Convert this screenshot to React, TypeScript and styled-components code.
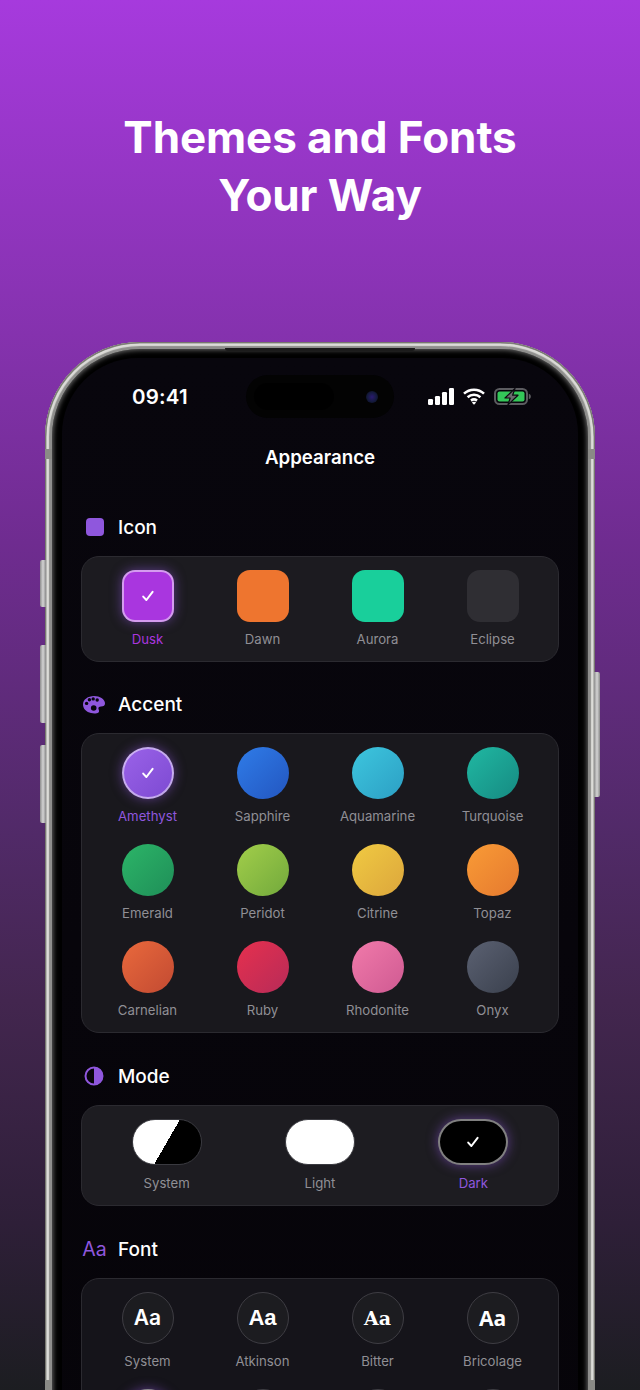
import React from 'react';
import styled, {createGlobalStyle, css} from 'styled-components';

const GlobalStyle = createGlobalStyle`
html, body {
    margin: 0;
    padding: 0;
    background: #1c1c20;
}
* {
    box-sizing: border-box;
}
`;

const UI_FONT = `Inter, "Noto Sans", sans-serif`;
const ACCENT = '#8f57dd';

const Page = styled.div`
display: flex;
flex-direction: column;
align-items: center;
width: 640px;
height: 1390px;
overflow: hidden;
font-family: ${UI_FONT};
background: linear-gradient(180deg, #a63add 0%, #8532ae 24%, #6f2c90 39%, #512a68 60%, #43264f 72%, #2e1f38 88%, #1c1d21 100%);
`;

const Headline = styled.h1`
margin: 108px 0 0;
font-size: 44px;
line-height: 58px;
font-weight: 700;
letter-spacing: -0.1px;
text-align: center;
color: #fff;
`;

const PhoneWrap = styled.div`
position: relative;
flex: none;
width: 550px;
height: 1200px;
margin-top: 118px;
`;

const SideButton = styled.div<{$side: 'left' | 'right'; $top: number; $height: number}>`
position: absolute;
top: ${p => p.$top}px;
height: ${p => p.$height}px;
width: 6px;
${p => p.$side === 'left' ? css`left: -5px; border-radius: 2px 0 0 2px;` : css`right: -5px; border-radius: 0 2px 2px 0;`}
background: linear-gradient(90deg, #8d8d8d, #d4d4d4 50%, #8a8a8a);
`;

const AntennaBand = styled.div<{$side: 'left' | 'right'; $top: number}>`
position: absolute;
top: ${p => p.$top}px;
${p => p.$side}: 0;
width: 7px;
height: 10px;
background: #8a8a86;
`;

const Frame = styled.div`
height: 100%;
padding: 7px;
border-radius: 95px;
background: #8e8e8c;
box-shadow: inset 0 0 0 1px #77776f, inset 0 0 0 1.5px #8e8e8c, inset 0 0 1px 4px #dcdcd8;
`;

const Bezel = styled.div`
position: relative;
height: 100%;
padding: 9px 10px;
border-radius: 88px;
background: #000;
box-shadow: inset 0 0 5px 1px rgba(150, 150, 150, 0.7);
`;

const Earpiece = styled.div`
position: absolute;
top: -1px;
left: 50%;
width: 190px;
height: 3px;
margin-left: -95px;
background: #1b1b1b;
border-radius: 0 0 8px 8px;
`;

const Screen = styled.div`
position: relative;
height: 100%;
padding: 24px 19px 0;
border-radius: 76px;
background: linear-gradient(180deg, #08060d 0%, #060409 100%);
overflow: hidden;
`;

const Island = styled.div`
position: absolute;
top: 17px;
left: 184px;
display: flex;
align-items: center;
justify-content: space-between;
width: 148px;
height: 43px;
padding: 0 9px 0 8px;
border-radius: 22px;
background: #030303;
`;

const IslandPill = styled.div`
width: 80px;
height: 27px;
border-radius: 14px;
background: #000;
`;

const Lens = styled.div`
width: 12px;
height: 12px;
margin-right: 7px;
border-radius: 50%;
background: radial-gradient(circle, #2a1a70 0%, #141a3c 55%, #080a14 100%);
`;

const StatusBar = styled.div`
display: flex;
align-items: center;
justify-content: space-between;
height: 28px;
padding: 0 28px 0 51px;
`;

const Clock = styled.span`
font-size: 20.5px;
font-weight: 600;
letter-spacing: 0.2px;
color: #fff;
`;

const StatusIcons = styled.div`
display: flex;
align-items: center;
gap: 9px;
`;

const Title = styled.div`
margin-top: 36px;
font-size: 18.7px;
line-height: 24px;
font-weight: 600;
text-align: center;
color: #fff;
`;

const SectionHead = styled.div<{$first?: boolean}>`
display: flex;
align-items: center;
gap: 14px;
height: 24px;
margin-top: ${p => p.$first ? 45.4 : 31}px;
padding-left: 3px;
font-size: 19px;
font-weight: 500;
color: #fff;
`;

const IconSlot = styled.span`
display: flex;
align-items: center;
justify-content: center;
width: 20px;
height: 20px;
color: ${ACCENT};
`;

const SquareIcon = styled.span`
width: 18px;
height: 18px;
margin-left: 1px;
border-radius: 4px;
background: ${ACCENT};
`;

const AaIcon = styled.span`
margin-left: 1px;
font-size: 19.5px;
font-weight: 400;
line-height: 20px;
color: ${ACCENT};
`;

const Card = styled.div<{$cols: number; $shade: string}>`
display: grid;
grid-template-columns: repeat(${p => p.$cols}, 1fr);
row-gap: 18px;
margin-top: 16.5px;
padding: 13px 8px 12px;
border: 1px solid #2b2a30;
border-radius: 18px;
background: ${p => p.$shade};
`;

const Option = styled.div`
display: flex;
flex-direction: column;
align-items: center;
`;

const selectedRing = css`
border: 2px solid rgba(255, 255, 255, 0.5);
box-shadow: 0 0 12px rgba(143, 87, 221, 0.55);
`;

const Swatch = styled.div<{$fill: string; $round?: boolean; $selected?: boolean}>`
display: flex;
align-items: center;
justify-content: center;
width: 52px;
height: 52px;
border-radius: ${p => p.$round ? '50%' : '13px'};
background: ${p => p.$fill};
${p => p.$selected && selectedRing}
`;

const ModePill = styled.div<{$fill: string; $selected?: boolean}>`
display: flex;
align-items: center;
justify-content: center;
width: 70px;
height: 46px;
margin-bottom: 1.5px;
border: 1px solid #3a3a40;
border-radius: 23px;
background: ${p => p.$fill};
${p => p.$selected && selectedRing}
`;

const FontCircle = styled.div<{$family: string; $weight: number; $size: number; $selected?: boolean}>`
display: flex;
align-items: center;
justify-content: center;
width: 52px;
height: 52px;
border: 1px solid #3e3d43;
border-radius: 50%;
background: #1c1c20;
font-family: ${p => p.$family};
font-weight: ${p => p.$weight};
font-size: ${p => p.$size}px;
color: #fff;
${p => p.$selected && selectedRing}
`;

const Label = styled.span<{$selected?: boolean; $tint?: string}>`
margin-top: 8px;
font-size: 13.2px;
line-height: 19px;
white-space: nowrap;
color: ${p => p.$selected ? (p.$tint || ACCENT) : '#908f95'};
`;

const Tick = () => (
    <svg width="14" height="14" viewBox="0 0 14 14" fill="none" stroke="#fff" strokeWidth="2" strokeLinecap="round" strokeLinejoin="round">
        <path d="M2.2 7.6 5.400 11 11.600 2.800"/>
    </svg>
);

const SignalIcon = () => (
    <svg width="26" height="17" viewBox="0 0 26 17" fill="#fff">
        <rect x="0" y="11" width="5" height="6" rx="1.200"/>
        <rect x="7" y="8" width="5" height="9" rx="1.200"/>
        <rect x="14" y="4" width="5" height="13" rx="1.200"/>
        <rect x="21" y="0" width="5" height="17" rx="1.200"/>
    </svg>
);

const WifiIcon = () => (
    <svg width="22" height="17" viewBox="0 0 22 17" fill="none" stroke="#fff" strokeWidth="2.600">
        <path d="M1 5.600C6.600.4 15.400.4 21 5.600"/>
        <path d="M4.600 9.200c3.600-3.200 9.200-3.200 12.800 0"/>
        <path d="M8 12.600c1.700-1.300 4.300-1.300 6 0"/>
        <path d="M11 16.800 8.800 14.500c1.300-.9 3.100-.9 4.400 0z" fill="#fff" stroke="none"/>
    </svg>
);

const BatteryIcon = () => (
    <svg width="37" height="17" viewBox="0 0 37 17">
        <rect x="1" y="1" width="32" height="15" rx="4.500" fill="none" stroke="#5c5c60" strokeWidth="2"/>
        <rect x="3.500" y="3.500" width="27" height="10" rx="2" fill="#34c759"/>
        <path d="M34.800 5.800c1.300.4 2 1.400 2 2.700s-.7 2.300-2 2.700z" fill="#5c5c60"/>
        <path d="M21 0.500 11 10h5.200l-2.200 6.800L24 7.200h-5.400z" fill="#6a6a6e" stroke="#0c0a10" strokeWidth="1.200" strokeLinejoin="round"/>
    </svg>
);

const PaletteIcon = () => (
    <svg width="24" height="19" viewBox="0 0 24 19" style={{flex: 'none'}}>
        <path d="M1 9.500C1 4.500 6 1 12 1c6 0 10.500 3 11 7 .3 2.500-1.500 3.500-4 3.500-2 0-3 1-2.500 2.500.5 1.500 1 2.500 0 3.500-1.500 1-4.500 1.300-7.500.5C4.500 17 1 14 1 9.500z" fill={ACCENT}/>
        <circle cx="4.600" cy="8.400" r="1.700" fill="#08060d"/>
        <circle cx="7.400" cy="4.800" r="1.700" fill="#08060d"/>
        <circle cx="11.200" cy="3.900" r="1.700" fill="#08060d"/>
        <circle cx="15.200" cy="5" r="1.700" fill="#08060d"/>
        <circle cx="11.700" cy="13" r="2.800" fill="#08060d"/>
    </svg>
);

const ContrastIcon = () => (
    <svg width="20" height="20" viewBox="0 0 20 20">
        <circle cx="10" cy="10" r="8.500" fill="none" stroke={ACCENT} strokeWidth="2"/>
        <path d="M10 1a9 9 0 0 1 0 18z" fill={ACCENT}/>
    </svg>
);

const ICONS = [
    {name: 'Dusk', fill: '#a936df', selected: true},
    {name: 'Dawn', fill: '#ee752f'},
    {name: 'Aurora', fill: '#19cf9b'},
    {name: 'Eclipse', fill: '#2f2e33'},
];

const ACCENTS = [
    {name: 'Amethyst', from: '#9a62e8', to: '#7d4ad2', selected: true},
    {name: 'Sapphire', from: '#2f7ce8', to: '#2356c0'},
    {name: 'Aquamarine', from: '#3dc6de', to: '#2c9fc4'},
    {name: 'Turquoise', from: '#20b8a2', to: '#168a82'},
    {name: 'Emerald', from: '#2cb568', to: '#1f8e58'},
    {name: 'Peridot', from: '#a2ce4a', to: '#72a93c'},
    {name: 'Citrine', from: '#f0ca42', to: '#dca63c'},
    {name: 'Topaz', from: '#f99b36', to: '#e5792f'},
    {name: 'Carnelian', from: '#e9693c', to: '#c24a32'},
    {name: 'Ruby', from: '#e6304e', to: '#b72b58'},
    {name: 'Rhodonite', from: '#f17aaa', to: '#cf5a92'},
    {name: 'Onyx', from: '#5b6172', to: '#3a404d'},
];

const MODES = [
    {name: 'System', fill: 'linear-gradient(120deg, #fff 50%, #000 50%)'},
    {name: 'Light', fill: '#fff'},
    {name: 'Dark', fill: '#000', selected: true},
];

const FONTS = [
    {name: 'System', family: `Inter, sans-serif`, weight: 600, size: 21},
    {name: 'Atkinson', family: `"Liberation Sans", sans-serif`, weight: 700, size: 22},
    {name: 'Bitter', family: `"DejaVu Serif", serif`, weight: 700, size: 19},
    {name: 'Bricolage', family: `"Open Sans", sans-serif`, weight: 700, size: 21},
];

const App = () => {
    return (
        <Page>
            <GlobalStyle/>
            <Headline>Themes and Fonts<br/>Your Way</Headline>
            <PhoneWrap>
                <SideButton $side="left" $top={218} $height={47}/>
                <SideButton $side="left" $top={303} $height={78}/>
                <SideButton $side="left" $top={403} $height={78}/>
                <SideButton $side="right" $top={330} $height={125}/>
                <Frame>
                    <Bezel>
                        <Earpiece/>
                        <Screen>
                            <Island>
                                <IslandPill/>
                                <Lens/>
                            </Island>
                            <StatusBar>
                                <Clock>09:41</Clock>
                                <StatusIcons>
                                    <SignalIcon/>
                                    <WifiIcon/>
                                    <BatteryIcon/>
                                </StatusIcons>
                            </StatusBar>
                            <Title>Appearance</Title>

                            <SectionHead $first>
                                <IconSlot><SquareIcon/></IconSlot>
                                Icon
                            </SectionHead>
                            <Card $cols={4} $shade="#1c1b20">
                                {ICONS.map(item => (
                                    <Option key={item.name}>
                                        <Swatch $fill={item.fill} $selected={item.selected}>
                                            {item.selected && <Tick/>}
                                        </Swatch>
                                        <Label $selected={item.selected} $tint="#a936df">{item.name}</Label>
                                    </Option>
                                ))}
                            </Card>

                            <SectionHead>
                                <IconSlot><PaletteIcon/></IconSlot>
                                Accent
                            </SectionHead>
                            <Card $cols={4} $shade="#19181d">
                                {ACCENTS.map(item => (
                                    <Option key={item.name}>
                                        <Swatch $round $fill={`linear-gradient(135deg, ${item.from}, ${item.to})`} $selected={item.selected}>
                                            {item.selected && <Tick/>}
                                        </Swatch>
                                        <Label $selected={item.selected}>{item.name}</Label>
                                    </Option>
                                ))}
                            </Card>

                            <SectionHead>
                                <IconSlot><ContrastIcon/></IconSlot>
                                Mode
                            </SectionHead>
                            <Card $cols={3} $shade="#1d1c21">
                                {MODES.map(item => (
                                    <Option key={item.name}>
                                        <ModePill $fill={item.fill} $selected={item.selected}>
                                            {item.selected && <Tick/>}
                                        </ModePill>
                                        <Label $selected={item.selected}>{item.name}</Label>
                                    </Option>
                                ))}
                            </Card>

                            <SectionHead>
                                <IconSlot><AaIcon>Aa</AaIcon></IconSlot>
                                Font
                            </SectionHead>
                            <Card $cols={4} $shade="#15141a">
                                {FONTS.map(item => (
                                    <Option key={item.name}>
                                        <FontCircle $family={item.family} $weight={item.weight} $size={item.size}>Aa</FontCircle>
                                        <Label>{item.name}</Label>
                                    </Option>
                                ))}
                                {/* next row only just peeks in at the bottom of the page */}
                                <Option><FontCircle $family={UI_FONT} $weight={600} $size={21} $selected/></Option>
                                <Option><FontCircle $family={UI_FONT} $weight={600} $size={21}/></Option>
                                <Option><FontCircle $family={UI_FONT} $weight={600} $size={21}/></Option>
                                <Option><FontCircle $family={UI_FONT} $weight={600} $size={21}/></Option>
                            </Card>
                        </Screen>
                    </Bezel>
                    <AntennaBand $side="left" $top={107}/>
                    <AntennaBand $side="right" $top={107}/>
                    <AntennaBand $side="left" $top={1038}/>
                    <AntennaBand $side="right" $top={1038}/>
                </Frame>
            </PhoneWrap>
        </Page>
    );
};

export default App;
